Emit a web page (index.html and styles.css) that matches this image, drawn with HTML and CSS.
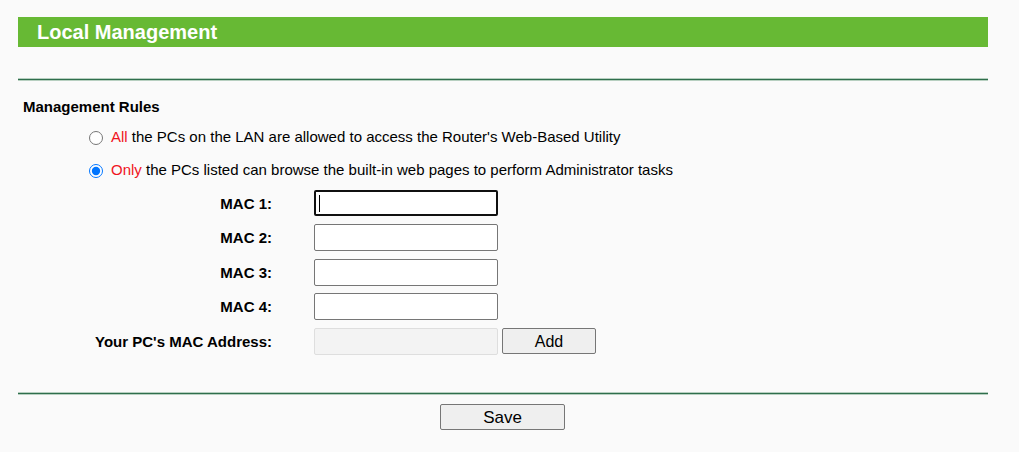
FILE: index.html
```html
<!DOCTYPE html>
<html>
<head>
<meta charset="utf-8">
<link rel="stylesheet" href="styles.css">
</head>
<body>
<div class="page">
  <div class="title-bar">Local Management</div>
  <div class="rule rule-top"></div>
  <div class="section-title">Management Rules</div>
  <div class="options">
    <label class="option"><input type="radio" name="rule" class="radio"><span><span class="hl">All</span> the PCs on the LAN are allowed to access the Router's Web-Based Utility</span></label>
    <label class="option"><input type="radio" name="rule" class="radio" checked><span><span class="hl">Only</span> the PCs listed can browse the built-in web pages to perform Administrator tasks</span></label>
  </div>
  <div class="form">
    <div class="label">MAC 1:</div>
    <div class="field"><input type="text" class="text-input focused"><span class="caret"></span></div>
    <div class="label">MAC 2:</div>
    <div class="field"><input type="text" class="text-input"></div>
    <div class="label">MAC 3:</div>
    <div class="field"><input type="text" class="text-input"></div>
    <div class="label">MAC 4:</div>
    <div class="field"><input type="text" class="text-input"></div>
    <div class="label">Your PC's MAC Address:</div>
    <div class="field"><input type="text" class="text-input disabled" disabled><button class="btn btn-add">Add</button></div>
  </div>
  <div class="rule rule-bottom"></div>
  <div class="actions"><button class="btn btn-save">Save</button></div>
</div>
</body>
</html>
```
FILE: styles.css
```css
html, body {
  margin: 0;
  padding: 0;
  background: #fafafa;
}
body {
  font-family: "Liberation Sans", Arial, sans-serif;
  font-size: 15px;
  color: #000;
}
.page {
  width: 970px;
  margin-left: 18px;
  padding-top: 17px;
}
.title-bar {
  height: 30px;
  background: #67b934;
  color: #fff;
  font-weight: bold;
  font-size: 20px;
  line-height: 30px;
  padding-left: 19px;
}
.rule {
  height: 1px;
  background: #2f6e4c;
  border-top: 1px solid #b7cfc0;
  border-bottom: 1px solid #b7cfc0;
}
.rule-top {
  margin-top: 31px;
}
.section-title {
  font-weight: bold;
  font-size: 15px;
  margin-top: 17px;
  padding-left: 5px;
  line-height: 17px;
}
.options {
  display: flex;
  flex-direction: column;
  gap: 15px;
  margin-top: 13px;
  padding-left: 71px;
}
.option {
  display: flex;
  align-items: center;
  gap: 8px;
  line-height: 18px;
  font-size: 15px;
}
.radio {
  margin: 2px 0 0 0;
  width: 14px;
  height: 14px;
  accent-color: #0075ff;
}
.hl {
  color: #f0141e;
}
.form {
  display: grid;
  grid-template-columns: 254px auto;
  grid-template-rows: 34px 35px 34px 35px 27px;
  column-gap: 42px;
  margin-top: 11px;
}
.label {
  text-align: right;
  font-weight: bold;
  font-size: 15px;
  line-height: 27px;
}
.field {
  position: relative;
  display: flex;
  align-items: flex-start;
  gap: 4px;
}
.text-input {
  box-sizing: border-box;
  width: 184px;
  height: 27px;
  margin: 0;
  border: 1px solid #767676;
  border-radius: 2px;
  background: #fff;
  padding: 1px 4px;
  font-family: "Liberation Sans", Arial, sans-serif;
  font-size: 15px;
}
.text-input.focused {
  height: 26px;
  border: 2px solid #101010;
  outline: none;
}
.caret {
  position: absolute;
  left: 5px;
  top: 5px;
  width: 1px;
  height: 17px;
  background: #000;
}
.text-input.disabled {
  background: #f3f3f3;
  border-color: #dedede;
}
.btn {
  box-sizing: border-box;
  margin: 0;
  background: #efefef;
  border: 1px solid #767676;
  border-radius: 2px;
  font-family: "Liberation Sans", Arial, sans-serif;
  font-size: 16px;
  color: #000;
  padding: 1px 0 0;
}
.btn-add {
  width: 94px;
  height: 26px;
}
.rule-bottom {
  margin-top: 37px;
}
.actions {
  display: flex;
  justify-content: center;
  margin-top: 9px;
  padding-right: 1px;
}
.btn-save {
  width: 125px;
  height: 26px;
  font-size: 17px;
}
```
